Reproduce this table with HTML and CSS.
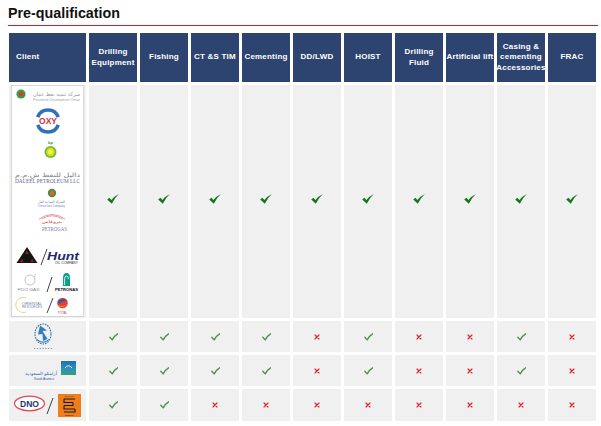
FILE: index.html
```html
<!DOCTYPE html>
<html lang="en">
<head>
<meta charset="utf-8">
<title>Pre-qualification</title>
<link rel="stylesheet" href="styles.css">
</head>
<body>
<svg class="defs" aria-hidden="true">
  <symbol id="ok-big" viewBox="0 0 12 10">
    <path d="M0.2 5.4 L2.4 3.8 L4.4 6.1 Q7.4 2.3 11.9 0.1 Q7.9 3.6 4.8 9.7 Z" fill="currentColor"/>
  </symbol>
  <symbol id="ok" viewBox="0 0 9 8">
    <path d="M0.8 4.3 L3.2 6.9 Q5.2 2.8 8.6 0.8" fill="none" stroke="currentColor" stroke-width="1.35" stroke-linecap="round" stroke-linejoin="round"/>
  </symbol>
  <symbol id="no" viewBox="0 0 7 7">
    <path d="M1.2 1.2 L5.8 5.8 M5.8 1.2 L1.2 5.8" fill="none" stroke="currentColor" stroke-width="1.4" stroke-linecap="round"/>
  </symbol>
</svg>

<h1 class="title">Pre-qualification</h1>

<div class="matrix">
  <div class="hd hd-client">Client</div>
  <div class="hd">Drilling<br>Equipment</div>
  <div class="hd">Fishing</div>
  <div class="hd">CT &amp;S TIM</div>
  <div class="hd">Cementing</div>
  <div class="hd">DD/LWD</div>
  <div class="hd">HOIST</div>
  <div class="hd">Drilling<br>Fluid</div>
  <div class="hd">Artificial lift</div>
  <div class="hd">Casing &amp;<br>cementing<br>Accessories</div>
  <div class="hd">FRAC</div>

  <!-- Row 1: group of clients -->
  <div class="cell client-big">
    <div class="logo-box">
      <svg class="lg" width="71" height="16" viewBox="0 0 71 16">
        <circle cx="9" cy="8" r="4.6" fill="#3f9b46"/>
        <circle cx="9" cy="8" r="2.3" fill="#c9452e"/>
        <text class="ar" x="21" y="10" font-size="5.5" fill="#9a9a9a" textLength="47" lengthAdjust="spacingAndGlyphs">شركة تنمية نفط عمان</text>
        <text class="en" x="21" y="14.5" font-size="3.2" fill="#a0a0a0" textLength="47" lengthAdjust="spacingAndGlyphs">Petroleum Development Oman</text>
      </svg>
      <svg class="lg" width="71" height="35" viewBox="0 0 71 35">
        <path d="M25.7 15.2 A11 11 0 0 1 46.3 15.2" fill="none" stroke="#2f70b8" stroke-width="3.6"/>
        <path d="M25.7 22.8 A11 11 0 0 0 46.3 22.8" fill="none" stroke="#2f70b8" stroke-width="3.6"/>
        <text class="en b" x="36" y="22.3" font-size="9" fill="#d92b2e" text-anchor="middle" textLength="18" lengthAdjust="spacingAndGlyphs">OXY</text>
      </svg>
      <svg class="lg" width="71" height="23" viewBox="0 0 71 23">
        <text class="en b" x="38.5" y="6.5" font-size="4" fill="#3b8f3b" text-anchor="middle">bp</text>
        <circle cx="38.5" cy="15" r="6" fill="#6fb83c"/>
        <circle cx="38.5" cy="15" r="4.2" fill="#cfe427"/>
        <circle cx="38.5" cy="15" r="2.3" fill="#fff33a"/>
      </svg>
      <svg class="lg" width="71" height="26" viewBox="0 0 71 26">
        <text class="ar" x="3" y="17" font-size="6" fill="#808080" textLength="65" lengthAdjust="spacingAndGlyphs">داليل للنفط ش.م.م</text>
        <text class="sf" x="3" y="23" font-size="5.2" fill="#5a6788" textLength="65" lengthAdjust="spacingAndGlyphs">DALEEL PETROLEUM LLC</text>
      </svg>
      <svg class="lg" width="71" height="25" viewBox="0 0 71 25">
        <circle cx="40" cy="7" r="4.2" fill="#4d8f38"/>
        <circle cx="40" cy="7" r="2.2" fill="#d9663a"/>
        <text class="ar" x="26" y="17" font-size="3.6" fill="#7a7a7a" textLength="27" lengthAdjust="spacingAndGlyphs">الشركة العمانية للغاز</text>
        <text class="en" x="26" y="21" font-size="2.8" fill="#6f8bbb" textLength="27" lengthAdjust="spacingAndGlyphs">Oman Gas Company</text>
      </svg>
      <svg class="lg" width="71" height="27" viewBox="0 0 71 27">
        <path d="M27 8 Q40 -1 53 8" fill="none" stroke="#e28ca2" stroke-width="0.9"/>
        <path d="M29.5 8 Q40 1.5 50.5 8" fill="none" stroke="#e28ca2" stroke-width="0.9"/>
        <text class="ar" x="40" y="12" font-size="4" fill="#d3303c" text-anchor="middle" textLength="20" lengthAdjust="spacingAndGlyphs">بتروغاس</text>
        <text class="sf" x="42.5" y="19.5" font-size="5.4" fill="#6f7cb8" text-anchor="middle" textLength="25" lengthAdjust="spacingAndGlyphs">PETROGAS</text>
      </svg>
      <svg class="lg" width="71" height="30" viewBox="0 0 71 30">
        <path d="M15 9 L4.5 25 L25.5 25 Z" fill="#141414"/>
        <path d="M15 12.5 L13 16 L17 16 Z M9.8 20.5 L7.9 24 L11.7 24 Z M20.2 20.5 L18.3 24 L22.1 24 Z" fill="#8e1d1d"/>
        <path d="M29 27 L35 11" stroke="#111" stroke-width="0.8"/>
        <text class="en b i" x="35" y="22" font-size="11.5" fill="#1d2b6e" textLength="32" lengthAdjust="spacingAndGlyphs">Hunt</text>
        <text class="en" x="43" y="26" font-size="3" fill="#333" textLength="23" lengthAdjust="spacingAndGlyphs">OIL COMPANY</text>
      </svg>
      <svg class="lg" width="71" height="26" viewBox="0 0 71 26">
        <circle cx="18" cy="12" r="5" fill="none" stroke="#9a9a9a" stroke-width="0.6"/>
        <text class="en" x="22" y="9" font-size="3.2" fill="#8a8a8a">2</text>
        <text class="en" x="16.5" y="23" font-size="3" fill="#8a8a8a" text-anchor="middle" textLength="22" lengthAdjust="spacingAndGlyphs">PDO GAS</text>
        <path d="M35 24 L40 9" stroke="#111" stroke-width="0.8"/>
        <path d="M51 18 L51 10 Q51 5 54.5 5 Q58 5 58 10 L58 18 Z" fill="#0a9f8d"/>
        <path d="M52.6 17 L52.6 11 Q52.6 8 54.5 8 Q56.4 8 56.4 11" fill="none" stroke="#fff" stroke-width="0.8"/>
        <text class="en b" x="43" y="23" font-size="3.6" fill="#111" textLength="23" lengthAdjust="spacingAndGlyphs">PETRONAS</text>
      </svg>
      <svg class="lg" width="71" height="22" viewBox="0 0 71 22">
        <path d="M14 4 A7.5 7.5 0 1 0 14 18" fill="none" stroke="#c8cf45" stroke-width="0.7"/>
        <text class="en" x="10" y="11" font-size="2.6" fill="#6f7fa6" textLength="20" lengthAdjust="spacingAndGlyphs">ORIENTAL</text>
        <text class="en" x="10" y="14" font-size="2.6" fill="#6f7fa6" textLength="20" lengthAdjust="spacingAndGlyphs">RESOURCES</text>
        <path d="M35 19 L41 4" stroke="#111" stroke-width="0.8"/>
        <circle cx="50.5" cy="9" r="5.3" fill="#e6402f"/>
        <path d="M46 7 Q50 3.5 55.5 6.5 Q51 6 46.5 10 Z" fill="#2b5aa8"/>
        <path d="M46 11 Q50 13.5 55.3 10.5 Q51 14.5 46.5 12 Z" fill="#f5a623"/>
        <text class="en" x="50.5" y="19.5" font-size="3" fill="#e22b2b" text-anchor="middle">TOTAL</text>
      </svg>
    </div>
  </div>
  <div class="cell big"><svg class="ok-big"><use href="#ok-big"/></svg></div>
  <div class="cell big"><svg class="ok-big"><use href="#ok-big"/></svg></div>
  <div class="cell big"><svg class="ok-big"><use href="#ok-big"/></svg></div>
  <div class="cell big"><svg class="ok-big"><use href="#ok-big"/></svg></div>
  <div class="cell big"><svg class="ok-big"><use href="#ok-big"/></svg></div>
  <div class="cell big"><svg class="ok-big"><use href="#ok-big"/></svg></div>
  <div class="cell big"><svg class="ok-big"><use href="#ok-big"/></svg></div>
  <div class="cell big"><svg class="ok-big"><use href="#ok-big"/></svg></div>
  <div class="cell big"><svg class="ok-big"><use href="#ok-big"/></svg></div>
  <div class="cell big"><svg class="ok-big"><use href="#ok-big"/></svg></div>

  <!-- Row 2 -->
  <div class="cell client">
    <svg class="lg" width="77" height="31" viewBox="0 0 77 31">
      <ellipse cx="34" cy="13" rx="8" ry="10" fill="none" stroke="#2f6fb0" stroke-width="1.1" stroke-dasharray="1.6 1"/>
      <path d="M31 4.5 L38 9.5 L33.5 10 L38.5 18 L34 20 L33.5 13 L29 13.5 Z" fill="#2f7fc0"/>
      <path d="M28 18.5 Q34 24 40 18.5" fill="none" stroke="#2f6fb0" stroke-width="1"/>
      <text class="en" x="34" y="28.5" font-size="2.8" fill="#2f5f9a" text-anchor="middle" textLength="18" lengthAdjust="spacingAndGlyphs">• • • • • • •</text>
    </svg>
  </div>
  <div class="cell"><svg class="ok"><use href="#ok"/></svg></div>
  <div class="cell"><svg class="ok"><use href="#ok"/></svg></div>
  <div class="cell"><svg class="ok"><use href="#ok"/></svg></div>
  <div class="cell"><svg class="ok"><use href="#ok"/></svg></div>
  <div class="cell"><svg class="no"><use href="#no"/></svg></div>
  <div class="cell"><svg class="ok"><use href="#ok"/></svg></div>
  <div class="cell"><svg class="no"><use href="#no"/></svg></div>
  <div class="cell"><svg class="no"><use href="#no"/></svg></div>
  <div class="cell"><svg class="ok"><use href="#ok"/></svg></div>
  <div class="cell"><svg class="no"><use href="#no"/></svg></div>

  <!-- Row 3 -->
  <div class="cell client">
    <svg class="lg" width="77" height="31" viewBox="0 0 77 31">
      <defs>
        <linearGradient id="aramco" x1="0" y1="0" x2="0" y2="1">
          <stop offset="0" stop-color="#1f6fae"/>
          <stop offset="0.55" stop-color="#2b8fc4"/>
          <stop offset="1" stop-color="#3aa36b"/>
        </linearGradient>
      </defs>
      <rect x="52" y="6" width="15" height="14" fill="url(#aramco)"/>
      <path d="M56 13 Q59.5 8.5 63 13" fill="none" stroke="#e8f4ff" stroke-width="1"/>
      <text class="ar" x="16" y="20" font-size="4.4" fill="#2a5fa3" textLength="32" lengthAdjust="spacingAndGlyphs">أرامكو السعودية</text>
      <text class="en" x="25" y="24.5" font-size="2.8" fill="#2a5fa3" textLength="20" lengthAdjust="spacingAndGlyphs">Saudi Aramco</text>
    </svg>
  </div>
  <div class="cell"><svg class="ok"><use href="#ok"/></svg></div>
  <div class="cell"><svg class="ok"><use href="#ok"/></svg></div>
  <div class="cell"><svg class="ok"><use href="#ok"/></svg></div>
  <div class="cell"><svg class="ok"><use href="#ok"/></svg></div>
  <div class="cell"><svg class="no"><use href="#no"/></svg></div>
  <div class="cell"><svg class="ok"><use href="#ok"/></svg></div>
  <div class="cell"><svg class="no"><use href="#no"/></svg></div>
  <div class="cell"><svg class="no"><use href="#no"/></svg></div>
  <div class="cell"><svg class="ok"><use href="#ok"/></svg></div>
  <div class="cell"><svg class="no"><use href="#no"/></svg></div>

  <!-- Row 4 -->
  <div class="cell client">
    <svg class="lg" width="77" height="32" viewBox="0 0 77 32">
      <ellipse cx="20.5" cy="14.5" rx="15" ry="7.3" fill="#fff" stroke="#e0474f" stroke-width="1.2"/>
      <text class="en b" x="20.5" y="17.8" font-size="9" fill="#26336e" text-anchor="middle" textLength="19" lengthAdjust="spacingAndGlyphs">DNO</text>
      <path d="M38 25 L44 9" stroke="#111" stroke-width="0.8"/>
      <rect x="49" y="5" width="23" height="23" fill="#f07d1c"/>
      <path d="M55 10 H66 M55 10 V13.5 H64 M64 13.5 V16.5 H55 M55 16.5 V20 H66 M66 20 V23 H55" fill="none" stroke="#1a1a1a" stroke-width="1.1"/>
      <text class="en" x="60.5" y="8" font-size="2.2" fill="#1a1a1a" text-anchor="middle">SAHARA</text>
      <text class="en" x="60.5" y="26.8" font-size="2.2" fill="#1a1a1a" text-anchor="middle">ENERGY</text>
    </svg>
  </div>
  <div class="cell"><svg class="ok"><use href="#ok"/></svg></div>
  <div class="cell"><svg class="ok"><use href="#ok"/></svg></div>
  <div class="cell"><svg class="no"><use href="#no"/></svg></div>
  <div class="cell"><svg class="no"><use href="#no"/></svg></div>
  <div class="cell"><svg class="no"><use href="#no"/></svg></div>
  <div class="cell"><svg class="no"><use href="#no"/></svg></div>
  <div class="cell"><svg class="no"><use href="#no"/></svg></div>
  <div class="cell"><svg class="no"><use href="#no"/></svg></div>
  <div class="cell"><svg class="no"><use href="#no"/></svg></div>
  <div class="cell"><svg class="no"><use href="#no"/></svg></div>
</div>
</body>
</html>
```

FILE: styles.css
```css
html, body {
  margin: 0;
  padding: 0;
  background: #ffffff;
}

body {
  font-family: "Liberation Sans", Arial, sans-serif;
  color: #111;
}

.defs {
  display: block;
  width: 0;
  height: 0;
  overflow: hidden;
}

.title {
  margin: 0 3px 0 8px;
  padding: 5px 0 4px 0;
  font-size: 14.3px;
  line-height: 16px;
  font-weight: bold;
  color: #111;
  border-bottom: 1px solid #c8202c;
}

.matrix {
  display: grid;
  grid-template-columns: 77px repeat(10, 48px);
  grid-template-rows: 49px 233px 31px 31px 32px;
  column-gap: 3px;
  row-gap: 3px;
  margin: 7px 0 0 9px;
}

.hd {
  background: #2e4470;
  color: #ffffff;
  font-size: 8px;
  font-weight: bold;
  letter-spacing: 0.2px;
  line-height: 10.5px;
  display: flex;
  align-items: center;
  justify-content: center;
  text-align: center;
  white-space: nowrap;
}

.hd-client {
  justify-content: flex-start;
  padding-left: 7px;
}

.cell {
  background: #f0f0f0;
  display: flex;
  align-items: center;
  justify-content: center;
}

.cell.big {
  padding-bottom: 5px;
}

.client-big {
  padding: 0 2px 1px 2px;
  align-items: stretch;
}

.logo-box {
  flex: 1;
  background: #ffffff;
  border: 1px solid #d6d6d6;
  display: flex;
  flex-direction: column;
}

.client {
  align-items: stretch;
  justify-content: stretch;
}

.lg {
  display: block;
  flex: none;
}

.lg .ar {
  font-family: "DejaVu Sans", sans-serif;
}

.lg .en {
  font-family: "Liberation Sans", Arial, sans-serif;
}

.lg .sf {
  font-family: "Liberation Serif", "Times New Roman", serif;
}

.lg .b {
  font-weight: bold;
}

.lg .i {
  font-style: italic;
}

.ok-big {
  width: 12px;
  height: 10px;
  color: #16761e;
}

.ok {
  width: 9px;
  height: 8px;
  color: #4c8f4e;
}

.no {
  width: 6px;
  height: 6px;
  color: #e51e2a;
}
```
